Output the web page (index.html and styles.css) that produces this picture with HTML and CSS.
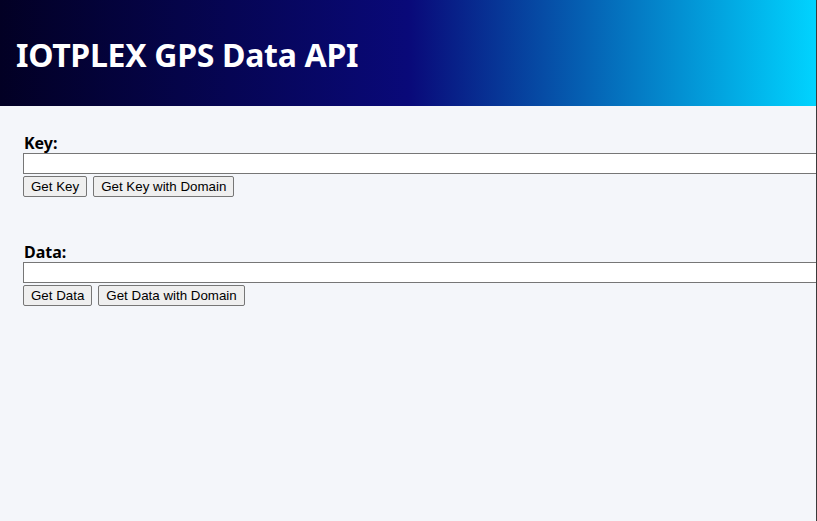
FILE: index.html
```html
<!DOCTYPE html>
<html>
<head>
<meta charset="utf-8">
<link rel="stylesheet" href="styles.css">
</head>
<body>
<header class="header">
  <h1 class="title">IOTPLEX GPS Data API</h1>
</header>
<main class="content">
  <section class="group">
    <label class="label" for="key">Key:</label>
    <input class="field" id="key" type="text">
    <div class="actions">
      <button class="btn">Get Key</button>
      <button class="btn">Get Key with Domain</button>
    </div>
  </section>
  <section class="group">
    <label class="label" for="data">Data:</label>
    <input class="field" id="data" type="text">
    <div class="actions">
      <button class="btn">Get Data</button>
      <button class="btn">Get Data with Domain</button>
    </div>
  </section>
</main>
<div class="edge"></div>
</body>
</html>
```
FILE: styles.css
```css
html, body {
  margin: 0;
  padding: 0;
  overflow: hidden;
  height: 100%;
}
body {
  background: #f4f6fa;
  font-family: "Noto Sans", "Open Sans", sans-serif;
  position: relative;
}
.header {
  height: 106px;
  background: linear-gradient(90deg, #020024 0%, #090979 50%, #00d4ff 100%);
  display: flex;
  align-items: center;
  padding-left: 16px;
}
.title {
  margin: 0;
  color: #fff;
  font-size: 32px;
  font-weight: 700;
  letter-spacing: -0.3px;
  line-height: 1;
  padding-top: 4px;
}
.content {
  padding: 27px 0 0 23px;
  display: flex;
  flex-direction: column;
  gap: 45px;
}
.group {
  display: flex;
  flex-direction: column;
}
.label {
  font-weight: 700;
  font-size: 16px;
  line-height: 20px;
  margin-left: 1px;
  color: #000;
}
.field {
  box-sizing: border-box;
  width: 820px;
  height: 21px;
  margin: 0;
  border: 1px solid #767676;
  background: #fff;
  padding: 1px 2px;
}
.actions {
  display: flex;
  gap: 6px;
  margin-top: 2px;
}
.btn {
  font-family: "Liberation Sans", Arial, sans-serif;
  font-size: 13.33px;
  height: 21px;
  padding: 1px 7px;
  border: 1px solid #767676;
  border-radius: 2px;
  background: #efefef;
  color: #000;
  margin: 0;
}
.edge {
  position: absolute;
  top: 0;
  right: 0;
  width: 1px;
  height: 100%;
  background: #3a3a3a;
}
```
